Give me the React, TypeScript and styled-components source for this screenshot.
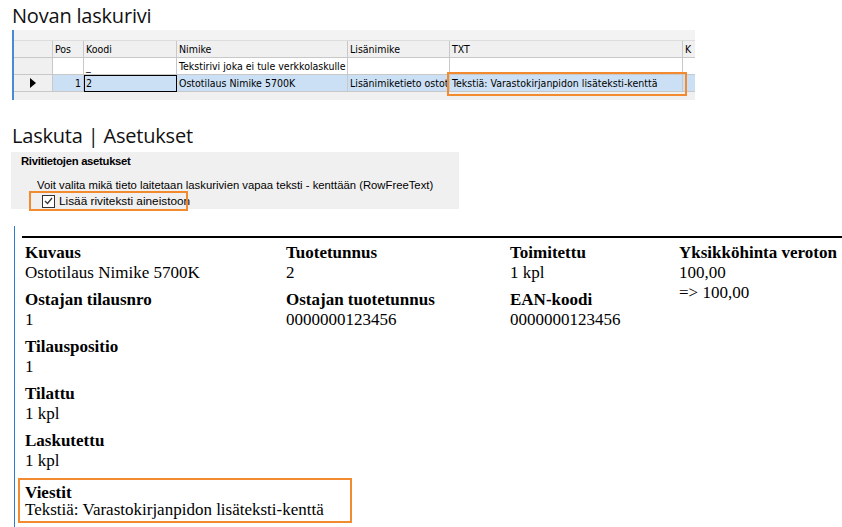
import React from "react";
import styled, { createGlobalStyle } from "styled-components";

const G = createGlobalStyle`
  body { margin: 0; background: #fff; font-family: "Liberation Sans", Arial, sans-serif; }
`;
const Page = styled.div`width: 842px; height: 527px; overflow: hidden; position: relative;`;
const Title = styled.div<{ $top: number }>`
  font-family: "Open Sans", "Liberation Sans", sans-serif; font-size: 20px; color: #111;
  padding: ${p => p.$top}px 0 0 12px; height: ${p => 30 - p.$top}px; line-height: 24px; letter-spacing: -0.2px;
`;
const GridWrap = styled.div`
  margin-left: 12px; width: 681px; height: 70px; border-left: 2px solid #4a8ad0;
  background: #f0f0f0; overflow: hidden; display: flex; flex-direction: column;
`;
const Toolbar = styled.div`height: 10px; background: #f3f3f3; border-bottom: 1px solid #ddd;`;
const Row = styled.div<{ $sel?: boolean }>`
  display: grid; grid-template-columns: 39px 31px 93px 171px 102px 233px 20px; height: 17px;
  background: ${p => (p.$sel ? "#cce0f5" : "#fff")};
`;
const Cell = styled.div<{ $head?: boolean; $right?: boolean; $box?: boolean }>`
  border-right: 1px solid #c8c8c8; border-bottom: 1px solid #c8c8c8; font-size: 10.5px; color: #000;
  font-family: "DejaVu Sans Condensed", "Liberation Sans Narrow", "Liberation Sans", sans-serif;
  padding: 0 2px; line-height: 16px; white-space: nowrap; overflow: hidden; position: relative;
  text-align: ${p => (p.$right ? "right" : "left")};
  background: ${p => (p.$head ? "#f0f0f0" : "transparent")};
  ${p => (p.$box ? "outline: 1px solid #000; outline-offset: -1px;" : "")}
`;
const Hi = styled.div<{ $l: number; $t: number; $w: number; $h: number }>`
  position: absolute; left: ${p => p.$l}px; top: ${p => p.$t}px; width: ${p => p.$w}px; height: ${p => p.$h}px;
  border: 2.5px solid #f28a30; box-sizing: border-box; pointer-events: none;
`;
const Panel = styled.div`
  margin: 4px 0 0 11px; width: 448px; height: 57px; background: #f0f0f0; box-sizing: border-box;
  padding: 3px 0 0 10px; font-family: "Liberation Sans", Arial, sans-serif; font-size: 11.3px; color: #000;
`;
const PanelHead = styled.div`font-weight: bold; height: 20px; letter-spacing: -0.3px;`;
const PanelText = styled.div`padding-left: 16px; line-height: 12px; margin-top: 4px;`;
const Check = styled.div`display: flex; align-items: center; gap: 4px; padding-left: 21px; margin-top: 3px; font-size: 11.8px;`;
const Box = styled.span`
  width: 11px; height: 11px; border: 1px solid #333; background: #fff; display: inline-flex;
  align-items: center; justify-content: center;
`;
const Doc = styled.div`
  margin: 17px 0 0 14px; border-left: 1px solid #2e7bd0; height: 400px; padding: 10px 0 0 7px;
  font-family: "Liberation Serif", "Times New Roman", serif; font-size: 17px; color: #000;
`;
const Rule = styled.div`height: 2px; background: #000; margin-bottom: 5px;`;
const Cols = styled.div`display: grid; grid-template-columns: 261px 224px 169px 200px; white-space: nowrap;`;
const Col = styled.div`display: flex; flex-direction: column; gap: 7px;`;
const Field = styled.div`line-height: 20px; padding-left: 3px;`;
const Label = styled.div`font-weight: bold;`;
const Msg = styled.div`margin-top: 7px; width: 334px; border: 2.5px solid #f28a30; box-sizing: border-box; padding: 4px 0 3px 5px; line-height: 17px; margin-left: -4px;`;

const F = ({ l, v }: { l: string; v: string[] }) => (
  <Field><Label>{l}</Label>{v.map(x => <div key={x}>{x}</div>)}</Field>
);

export default function App() {
  return (
    <Page>
      <G />
      <Title $top={4}>Novan laskurivi</Title>
      <GridWrap>
        <Toolbar />
        <Row>
          <Cell $head /><Cell $head>Pos</Cell><Cell $head>Koodi</Cell><Cell $head>Nimike</Cell>
          <Cell $head>Lisänimike</Cell><Cell $head>TXT</Cell><Cell $head>K</Cell>
        </Row>
        <Row>
          <Cell $head /><Cell /><Cell>_</Cell><Cell>Tekstirivi joka ei tule verkkolaskulle</Cell>
          <Cell /><Cell /><Cell />
        </Row>
        <Row $sel>
          <Cell $head style={{ textAlign: "center" }}>
            <svg width="8" height="10" viewBox="0 0 8 10" style={{ marginTop: 3 }}><path d="M1 0L7 5L1 10Z" fill="#000" /></svg>
          </Cell>
          <Cell $right>1</Cell><Cell $box>2</Cell><Cell>Ostotilaus Nimike 5700K</Cell>
          <Cell>Lisänimiketieto ostot</Cell><Cell>Tekstiä: Varastokirjanpidon lisäteksti-kenttä</Cell><Cell />
        </Row>
      </GridWrap>
      <Hi $l={447} $t={72} $w={240} $h={24} />
      <Title $top={24} style={{ height: 24 }}>Laskuta | Asetukset</Title>
      <Panel>
        <PanelHead>Rivitietojen asetukset</PanelHead>
        <PanelText>Voit valita mikä tieto laitetaan laskurivien vapaa teksti - kenttään (RowFreeText)</PanelText>
        <Check>
          <Box><svg width="9" height="8" viewBox="0 0 9 8"><path d="M1 4L3.5 6.5L8 1" stroke="#333" strokeWidth="1.2" fill="none" /></svg></Box>
          Lisää riviteksti aineistoon
        </Check>
      </Panel>
      <Hi $l={29} $t={191} $w={159} $h={20} />
      <Doc>
        <Rule />
        <Cols>
          <Col>
            <F l="Kuvaus" v={["Ostotilaus Nimike 5700K"]} />
            <F l="Ostajan tilausnro" v={["1"]} />
            <F l="Tilauspositio" v={["1"]} />
            <F l="Tilattu" v={["1 kpl"]} />
            <F l="Laskutettu" v={["1 kpl"]} />
          </Col>
          <Col>
            <F l="Tuotetunnus" v={["2"]} />
            <F l="Ostajan tuotetunnus" v={["0000000123456"]} />
          </Col>
          <Col>
            <F l="Toimitettu" v={["1 kpl"]} />
            <F l="EAN-koodi" v={["0000000123456"]} />
          </Col>
          <Col>
            <F l="Yksikköhinta veroton" v={["100,00", "=> 100,00"]} />
          </Col>
        </Cols>
        <Msg><Label>Viestit</Label><div>Tekstiä: Varastokirjanpidon lisäteksti-kenttä</div></Msg>
      </Doc>
    </Page>
  );
}
